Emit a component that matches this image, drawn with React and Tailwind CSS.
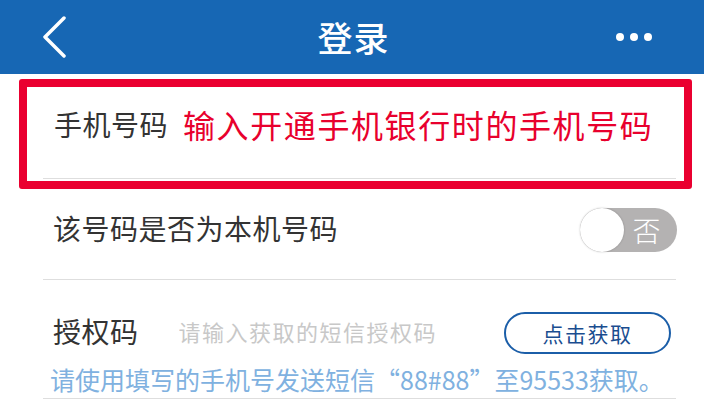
import React, { useState } from "react";

const FONT = { fontFamily: '"Noto Sans CJK SC", "Noto Sans", sans-serif' };

const BackIcon = () => (
  <svg width="26" height="42" viewBox="0 0 26 42" fill="none">
    <path d="M23 2 L4 21 L23 40" stroke="white" strokeWidth="3.5" strokeLinecap="round" strokeLinejoin="round" />
  </svg>
);

const MoreIcon = () => (
  <div className="flex items-center gap-[6px]">
    <span className="w-[8px] h-[8px] rounded-full bg-white" />
    <span className="w-[8px] h-[8px] rounded-full bg-white" />
    <span className="w-[8px] h-[8px] rounded-full bg-white" />
  </div>
);

const App = () => {
  const [isOwn, setIsOwn] = useState(false);

  return (
    <div className="w-[704px] h-[400px] bg-white overflow-hidden text-[#333]" style={FONT}>
      {/* Header */}
      <div className="h-[74px] bg-[#1767b4] flex items-center justify-between pl-[41px] pr-[52px]">
        <button className="w-[40px] flex items-center">
          <BackIcon />
        </button>
        <h1 className="text-white text-[35px] font-medium tracking-[1px] ml-[14px]">登录</h1>
        <button className="w-[40px] flex items-center justify-end">
          <MoreIcon />
        </button>
      </div>

      <div className="pl-[43px] pr-[28px]">
        {/* Phone number row, highlighted */}
        <div className="relative h-[105px] border-b border-[#dedede] flex items-center pl-[11px] pb-[5px]">
          <span className="text-[28px] leading-none tracking-[0.5px]">手机号码</span>
          <span className="ml-[15px] text-[32px] leading-none tracking-[1.6px] text-[#e8002d]">
            输入开通手机银行时的手机号码
          </span>
          <div className="absolute left-[-24px] top-[5px] w-[673px] h-[110px] border-[8px] border-[#ea0030] rounded-[3px] pointer-events-none" />
        </div>

        {/* Own number row */}
        <div className="h-[101px] border-b border-[#dedede] flex items-center justify-between pl-[10px] pb-[2px]">
          <span className="text-[28px] leading-none tracking-[0.5px]">该号码是否为本机号码</span>
          <button
            onClick={() => setIsOwn(!isOwn)}
            className="w-[97px] h-[44px] rounded-full bg-[#b4b2b2] flex items-center mt-[4px] mr-[-1px]"
          >
            <span className="w-[44px] h-[44px] rounded-full bg-white shadow-[0_0_2px_rgba(0,0,0,0.25)]" />
            <span className="flex-1 text-white text-[28px] leading-none font-light pr-[8px]">否</span>
          </button>
        </div>

        {/* Auth code row */}
        <div className="border-b border-[#dedede] pt-[32px] pb-[4px]">
          <div className="flex items-center">
            <span className="text-[28px] leading-none tracking-[0.5px] pl-[10px] mt-[-5px]">授权码</span>
            <input
              className="ml-[40px] w-[270px] text-[22px] tracking-[1.5px] outline-none placeholder:text-[#c8c8c8] mt-[-4px]"
              placeholder="请输入获取的短信授权码"
            />
            <button className="ml-auto mr-[5px] w-[167px] h-[42px] rounded-full border-2 border-[#1b5ea8] text-[#1a4d8f] text-[21px] tracking-[1.5px] leading-none">
              点击获取
            </button>
          </div>
          <p className="mt-[10px] pl-[7px] text-[25px] leading-[30px] text-[#80b1e0] whitespace-nowrap">
            请使用填写的手机号发送短信“88#88”至95533获取。
          </p>
        </div>
      </div>
    </div>
  );
};

export default App;
